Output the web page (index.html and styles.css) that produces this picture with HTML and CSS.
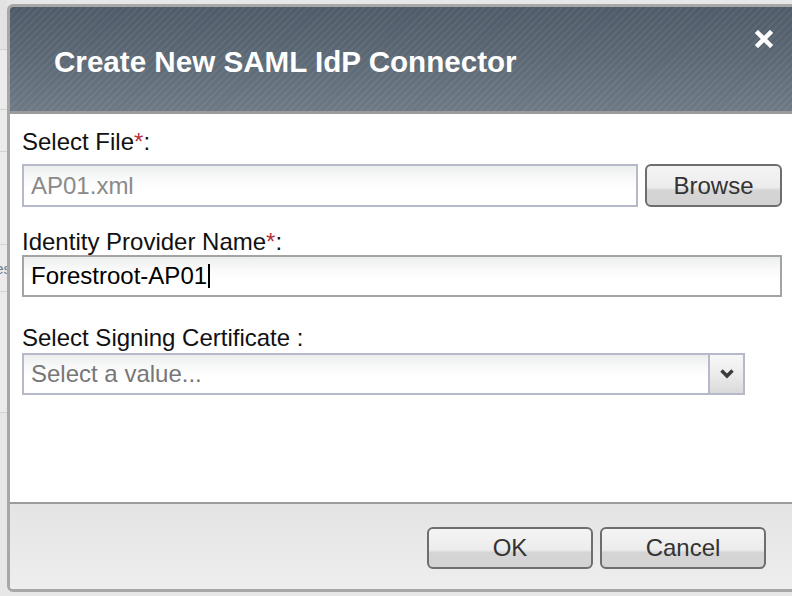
FILE: index.html
```html
<!DOCTYPE html>
<html lang="en">
<head>
    <meta charset="UTF-8">
    <meta name="viewport" content="width=device-width, initial-scale=1.0">
    <title>Create New SAML IdP Connector</title>
    <link rel="stylesheet" href="styles.css">
</head>
<body>
    <div class="page">
        <!-- table behind the dialog, only its left edge shows -->
        <div class="backdrop">
            <div class="backdrop-row r1"></div>
            <div class="backdrop-row r2"></div>
            <div class="backdrop-row r3"></div>
            <div class="backdrop-row r4"></div>
            <div class="backdrop-row r5"><span>es</span></div>
            <div class="backdrop-row r6"></div>
        </div>

        <div class="dialog">
            <div class="dialog-header">
                <h1>Create New SAML IdP Connector</h1>
                <button class="close-btn" title="Close">
                    <svg width="18" height="18" viewBox="0 0 18 18">
                        <path d="M3 3 L15 15 M15 3 L3 15" stroke="#fff" stroke-width="4.5" stroke-linecap="square" fill="none"/>
                    </svg>
                </button>
            </div>

            <div class="dialog-body">
                <label class="field-label first">Select File<span class="req">*</span>:</label>
                <div class="file-row">
                    <div class="text-input file-input">AP01.xml</div>
                    <button class="btn browse-btn">Browse</button>
                </div>

                <label class="field-label second">Identity Provider Name<span class="req">*</span>:</label>
                <div class="text-input name-input">Forestroot-AP01<span class="caret"></span></div>

                <label class="field-label third">Select Signing Certificate :</label>
                <div class="select-box">
                    <div class="select-value">Select a value...</div>
                    <div class="select-arrow">
                        <svg width="14" height="10" viewBox="0 0 14 10">
                            <path d="M1.5 1.5 L7 7 L12.5 1.5" stroke="#3c3c3c" stroke-width="3.5" fill="none"/>
                        </svg>
                    </div>
                </div>
            </div>

            <div class="dialog-footer">
                <button class="btn footer-btn">OK</button>
                <button class="btn footer-btn">Cancel</button>
            </div>
        </div>
    </div>
</body>
</html>
```

FILE: styles.css
```css
body {
    margin: 0;
    height: 596px;
    overflow: hidden;
    background: #e7e7e7;
    font-family: "Liberation Sans", Arial, sans-serif;
}

.page {
    display: flex;
    align-items: flex-start;
}

.backdrop {
    flex: none;
    width: 7px;
    display: flex;
    flex-direction: column;
    background: #ebebeb;
}

.backdrop-row {
    border-bottom: 1px solid #d2d2d2;
    overflow: hidden;
}

.backdrop-row.r1 { height: 49px; background: #e2e2e2; }
.backdrop-row.r2 { height: 59px; }
.backdrop-row.r3 { height: 41px; }
.backdrop-row.r4 { height: 92px; }
.backdrop-row.r5 {
    height: 46px;
    display: flex;
    align-items: center;
    justify-content: flex-end;
}
.backdrop-row.r6 { height: 120px; }

.backdrop-row span {
    font-size: 15px;
    color: #6b7d8f;
    margin-right: -4px;
}

.dialog {
    flex: none;
    box-sizing: border-box;
    width: 790px;
    margin-top: 4px;
    border: 3px solid #a7a7a7;
    border-radius: 6px;
    overflow: hidden;
    background: #fff;
}

.dialog-header {
    height: 107px;
    box-sizing: border-box;
    display: flex;
    justify-content: space-between;
    align-items: flex-start;
    padding: 37px 21px 0 44px;
    border-bottom: 3px solid #9b9b9b;
    background:
        repeating-linear-gradient(135deg, rgba(255,255,255,0.05) 0 2px, rgba(0,0,0,0) 2px 5px),
        linear-gradient(#4f5b68 0%, #5e6b77 55%, #6d7a86 100%);
}

.dialog-header h1 {
    margin: 0;
    font-size: 29.6px;
    line-height: 36px;
    font-weight: bold;
    color: #fff;
}

.close-btn {
    margin-top: -14px;
    padding: 0;
    border: 0;
    background: none;
    display: flex;
    cursor: pointer;
}

.dialog-body {
    height: 388px;
    box-sizing: border-box;
    padding: 15px 12px 0 12px;
}

.field-label {
    display: block;
    font-size: 24px;
    line-height: 26px;
    color: #111;
}

.field-label.first { margin-bottom: 9px; }
.field-label.second { margin-top: 22px; }
.field-label.third { margin-top: 28px; margin-bottom: 2px; }

.req {
    color: #b8333a;
}

.file-row {
    display: flex;
    gap: 7px;
}

.text-input {
    box-sizing: border-box;
    height: 43px;
    display: flex;
    align-items: center;
    padding-left: 7px;
    font-size: 24px;
    border: 2px solid #b5b9c9;
    background: linear-gradient(#eceeee 0%, #fafafa 35%, #fff 60%);
}

.file-input {
    flex: none;
    width: 616px;
    color: #8a8a8a;
}

.name-input {
    height: 42px;
    width: 760px;
    border-color: #a4a4a4;
    color: #000;
}

.caret {
    display: inline-block;
    width: 2px;
    height: 24px;
    margin-left: 1px;
    background: #000;
}

.btn {
    box-sizing: border-box;
    border: 2px solid #6e6e6e;
    border-radius: 6px;
    font-family: "Liberation Sans", Arial, sans-serif;
    font-size: 24px;
    color: #333;
    background: linear-gradient(#f4f4f4 0%, #ececec 55%, #d5d5d5 62%, #d3d3d3 100%);
    cursor: pointer;
}

.browse-btn {
    width: 137px;
    height: 43px;
    padding: 0;
}

.select-box {
    box-sizing: border-box;
    width: 723px;
    height: 42px;
    display: flex;
    border: 2px solid #b5b9c9;
    background: linear-gradient(#eceeee 0%, #fafafa 35%, #fff 60%);
}

.select-value {
    flex: 1;
    display: flex;
    align-items: center;
    padding-left: 7px;
    font-size: 24px;
    color: #777;
}

.select-arrow {
    width: 33px;
    display: flex;
    align-items: center;
    justify-content: center;
    border-left: 2px solid #b5b9c9;
    background: linear-gradient(#f7f7f7 0%, #ececec 50%, #dadada 100%);
}

.dialog-footer {
    height: 87px;
    box-sizing: border-box;
    display: flex;
    justify-content: flex-end;
    align-items: flex-start;
    gap: 7px;
    padding: 23px 28px 0 0;
    border-top: 2px solid #9c9c9c;
    background: linear-gradient(#e4e4e4 0%, #eeeeee 100%);
}

.footer-btn {
    width: 166px;
    height: 42px;
    padding: 0;
}
```
